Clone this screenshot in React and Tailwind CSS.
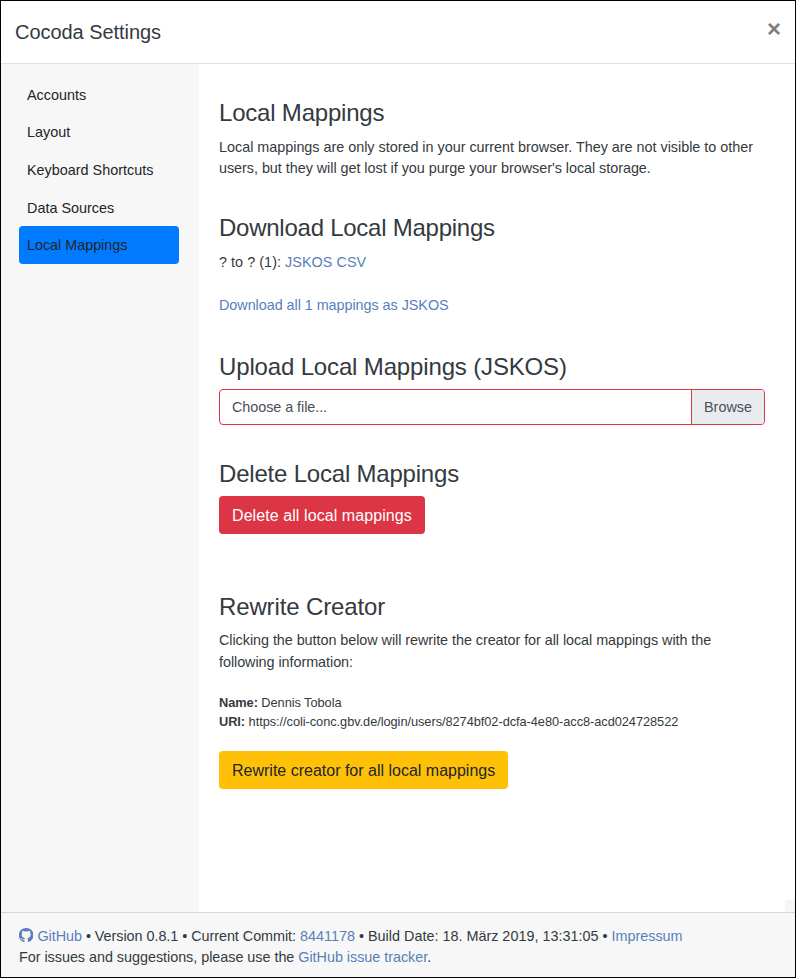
const tabs = ["Accounts", "Layout", "Keyboard Shortcuts", "Data Sources", "Local Mappings"];

function Link({ children }) {
  return <a href="#" className="text-[#577fbb]">{children}</a>;
}

function Title({ children, className = "tracking-[-0.2px]" }) {
  return <h4 className={`mb-2 text-[24px] leading-[28.8px] font-normal ${className}`}>{children}</h4>;
}

function GithubMark() {
  return (
    <svg viewBox="0 0 14 14" className="mr-1 inline-block h-[14.4px] w-[14.4px] align-[-1.4px]" fill="currentColor">
      <path d="M7 0a7 7 0 0 0-2.500 13.600c.5.1.8-.1.8-.5v-1.300c-1.900.4-2.600-.4-2.900-1-.2-.4-.5-.7-.8-.9.6-.2 1.100.1 1.500.7.5.7 1.300.8 2.200.5.1-.5.3-.9.6-1.200C3.900 9.700 2.600 8.600 2.600 6.400c0-.8.2-1.400.6-1.900-.2-.6-.2-1.300.1-1.900.7 0 1.400.3 2 .7a7.500 7.500 0 0 1 3.400 0c.6-.4 1.300-.7 2-.7.3.6.3 1.300.1 1.900.4.5.6 1.100.6 1.900 0 2.200-1.300 3.300-3.300 3.500.4.4.6.9.6 1.500v1.700c0 .4.300.6.800.5A7 7 0 0 0 7 0z" />
    </svg>
  );
}

export default function App() {
  return (
    <div className="flex h-[978px] w-[796px] flex-col overflow-hidden border border-black bg-white font-['Liberation_Sans',Arial,sans-serif] text-[14.4px] leading-[21.6px] text-[#343a40]">
      <header className="flex h-[63px] shrink-0 items-start justify-between border-b border-[#dee2e6] px-[14px] pt-4">
        <h5 className="text-[20px] leading-[30px] tracking-[-0.05px]">Cocoda Settings</h5>
        <button className="text-[24px] leading-6 font-bold text-[#7f7f7f]">×</button>
      </header>
      <main className="flex min-h-0 flex-1">
        <nav className="flex w-[198px] shrink-0 flex-col bg-[#f7f7f7] pr-5 pl-[18px] pt-[11.8px]">
          {tabs.map((tab) => (
            <a
              key={tab}
              href="#"
              className={
                tab === "Local Mappings"
                  ? "rounded-[4px] bg-[#007bff] px-2 pt-[9px] pb-[7px] tracking-[-0.03px] text-[#212529]"
                  : "px-2 pt-[9px] pb-[7px] text-[#212529]"
              }
            >
              {tab}
            </a>
          ))}
        </nav>
        <div className="flex flex-1 flex-col">
          <div className="flex-1 pr-[30px] pl-5 pt-[35.2px]">
            <section className="h-[115px]">
              <Title>Local Mappings</Title>
              <p className="pt-[0.7px] tracking-[-0.02px]">
                Local mappings are only stored in your current browser. They are not visible to other
                <br />
                <span className="tracking-[-0.04px]">
                  users, but they will get lost if you purge your browser's local storage.
                </span>
              </p>
            </section>
            <section className="h-[138.6px]">
              <Title className="tracking-[-0.25px]">Download Local Mappings</Title>
              <p className="pt-[0.8px] tracking-[0.04px]">
                ? to ? (1): <Link>JSKOS</Link> <Link>CSV</Link>
              </p>
              <p className="mt-[21.6px] tracking-[-0.05px]">
                <Link>Download all 1 mappings as JSKOS</Link>
              </p>
            </section>
            <section className="h-[107px]">
              <Title className="tracking-[-0.15px]">Upload Local Mappings (JSKOS)</Title>
              <div className="-mt-[0.6px] flex h-9 overflow-hidden rounded-[4px] border border-[#dc3545] leading-[34px] text-[#495057]">
                <span className="flex-1 px-3 tracking-[-0.06px]">Choose a file...</span>
                <span className="w-[73px] border-l border-[#dc3545] bg-[#e9ecef] text-center">Browse</span>
              </div>
            </section>
            <section className="h-[133px]">
              <Title>Delete Local Mappings</Title>
              <button className="-mt-[0.6px] block h-[38px] rounded-[4px] bg-[#dc3545] px-[13px] pt-[2px] text-[16px] leading-6 tracking-[0.08px] text-white">
                Delete all local mappings
              </button>
            </section>
            <section>
              <Title className="tracking-[-0.13px]">Rewrite Creator</Title>
              <p className="pt-[0.7px] tracking-[-0.055px]">
                Clicking the button below will rewrite the creator for all local mappings with the
                following information:
              </p>
              <p className="mt-[19.1px] text-[12.8px] leading-[19.2px] tracking-[-0.055px]">
                <b>Name:</b> Dennis Tobola
                <br />
                <b>URI:</b> https://coli-conc.gbv.de/login/users/8274bf02-dcfa-4e80-acc8-acd024728522
              </p>
              <button className="mt-[19.6px] block h-[38px] rounded-[4px] bg-[#ffc107] px-[13px] pt-[2px] text-[16px] leading-6 text-[#212529]">
                Rewrite creator for all local mappings
              </button>
            </section>
          </div>
          <div className="h-3 w-[10px] self-end bg-[#f4f5f7]" />
        </div>
      </main>
      <footer className="h-[65px] shrink-0 border-t border-[#d6d6d6] bg-[#f7f7f7] px-[18px] pt-[12.8px]">
        <p>
          <span className="tracking-[-0.045px]">
            <Link>
              <GithubMark />
              GitHub
            </Link>{" "}
            • Version 0.8.1 • Current Commit:{" "}
          </span>
          <Link>8441178</Link> • Build Date: 18. März 2019, 13:31:05 • <Link>Impressum</Link>
        </p>
        <p className="tracking-[-0.035px]">
          For issues and suggestions, please use the <Link>GitHub issue tracker</Link>.
        </p>
      </footer>
    </div>
  );
}
